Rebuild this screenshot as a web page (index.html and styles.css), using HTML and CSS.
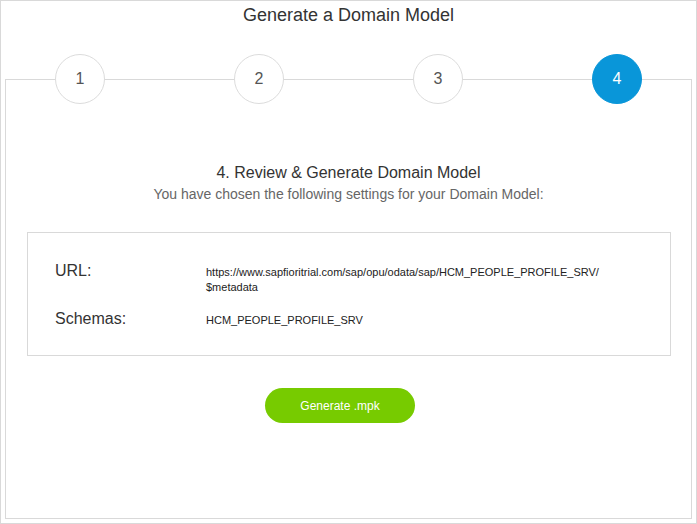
FILE: index.html
```html
<!DOCTYPE html>
<html>
<head>
<meta charset="utf-8">
<link rel="stylesheet" href="styles.css">
</head>
<body>
<div class="frame">
  <h1 class="title">Generate a Domain Model</h1>
  <div class="panel">
    <div class="stepper">
      <div class="step">1</div>
      <div class="step">2</div>
      <div class="step">3</div>
      <div class="step active">4</div>
    </div>
    <h2 class="heading">4. Review &amp; Generate Domain Model</h2>
    <p class="sub">You have chosen the following settings for your Domain Model:</p>
    <div class="summary">
      <div class="row">
        <div class="label">URL:</div>
        <div class="value">https://www.sapfioritrial.com/sap/opu/odata/sap/HCM_PEOPLE_PROFILE_SRV/<br>$metadata</div>
      </div>
      <div class="row">
        <div class="label">Schemas:</div>
        <div class="value">HCM_PEOPLE_PROFILE_SRV</div>
      </div>
    </div>
    <div class="actions">
      <button class="btn">Generate .mpk</button>
    </div>
  </div>
</div>
</body>
</html>
```
FILE: styles.css
```css
html, body {
  margin: 0;
  padding: 0;
  background: #fff;
}
body {
  font-family: "Liberation Sans", Arial, sans-serif;
  color: #333;
}
.frame {
  width: 697px;
  height: 524px;
  box-sizing: border-box;
  border: 1px solid #d9d9d9;
  padding: 0 4px 4px;
  display: flex;
  flex-direction: column;
}
.title {
  margin: 0;
  height: 78px;
  padding-top: 4px;
  box-sizing: border-box;
  font-size: 18px;
  line-height: 20px;
  font-weight: normal;
  text-align: center;
  color: #333;
}
.panel {
  flex: 1;
  border: 1px solid #d9d9d9;
  display: flex;
  flex-direction: column;
}
.stepper {
  display: flex;
  justify-content: space-between;
  margin-top: -26px;
  padding: 0 49px;
}
.step {
  width: 50px;
  height: 50px;
  box-sizing: border-box;
  border: 1px solid #dcdcdc;
  border-radius: 50%;
  background: #fff;
  display: flex;
  align-items: center;
  justify-content: center;
  font-size: 16px;
  color: #555;
}
.step.active {
  background: #0996d9;
  border-color: #0996d9;
  color: #fff;
}
.heading {
  margin: 59px 0 0;
  font-size: 16px;
  line-height: 20px;
  font-weight: normal;
  text-align: center;
  color: #333;
}
.sub {
  margin: 2px 0 0;
  font-size: 14px;
  line-height: 18px;
  text-align: center;
  color: #666;
}
.summary {
  margin: 29px 20px 0 21px;
  border: 1px solid #d9d9d9;
  padding: 28px 27px 26px;
  display: flex;
  flex-direction: column;
  gap: 14px;
}
.row {
  display: grid;
  grid-template-columns: 151px 1fr;
  align-items: baseline;
}
.label {
  font-size: 16px;
  line-height: 20px;
  color: #333;
}
.value {
  font-size: 11px;
  line-height: 15px;
  color: #222;
}
.actions {
  display: flex;
  justify-content: center;
  padding-right: 17px;
  margin-top: 32px;
}
.btn {
  width: 150px;
  height: 35px;
  border: none;
  border-radius: 18px;
  background: #77cb00;
  color: #fff;
  font-family: "Liberation Sans", Arial, sans-serif;
  font-size: 12px;
  padding: 0;
}
```
